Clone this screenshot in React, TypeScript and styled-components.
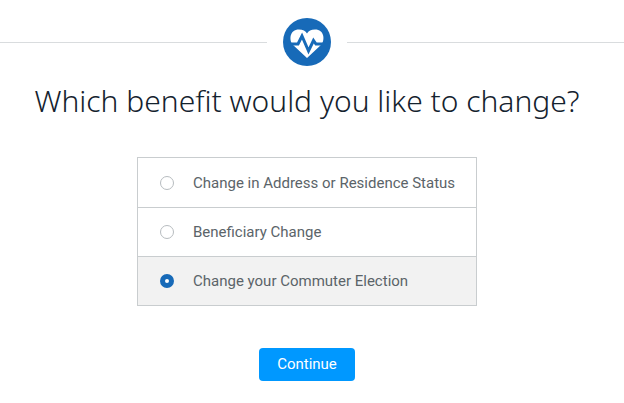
import React, { useState } from "react";
import styled, { createGlobalStyle } from "styled-components";

const GlobalStyle = createGlobalStyle`
  * { box-sizing: border-box; }
  body {
    margin: 0;
    background: #fff;
    font-family: Roboto, "Noto Sans", sans-serif;
    color: #14222e;
  }
`;

const Page = styled.main`
  display: flex;
  flex-direction: column;
  align-items: center;
  padding: 18px 10px 16px 0;
`;

const Divider = styled.header`
  align-self: stretch;
  display: flex;
  align-items: center;
  gap: 16px;
  margin-right: -10px;
`;

const Rule = styled.span<{ $trailing?: boolean }>`
  flex: 1 1 ${(p) => (p.$trailing ? "10px" : "0px")};
  height: 1px;
  background: #d9dcde;
`;

const Badge = styled.svg`
  flex: none;
  width: 48px;
  height: 48px;
`;

const Title = styled.h1`
  margin: 15px 0 0;
  font-family: "Noto Sans", "Open Sans", sans-serif;
  font-size: 30px;
  line-height: 40px;
  font-weight: 300;
  text-align: center;
`;

const Form = styled.form`
  display: flex;
  flex-direction: column;
  align-items: center;
  gap: 42px;
  margin-top: 36px;
  width: 100%;
`;

const Options = styled.fieldset`
  width: 100%;
  max-width: 340px;
  min-width: 0;
  margin: 0;
  padding: 0;
  border: 1px solid #c9cdcf;
`;

const Option = styled.label<{ $selected: boolean }>`
  display: flex;
  align-items: center;
  gap: 19px;
  min-height: 49px;
  padding: 0 12px 0 22px;
  font-size: 15px;
  line-height: 20px;
  color: #5b6469;
  background: ${(p) => (p.$selected ? "#f2f2f2" : "#fff")};
  cursor: pointer;

  & + & {
    border-top: 1px solid #c9cdcf;
  }
`;

const Radio = styled.input`
  appearance: none;
  flex: none;
  width: 14px;
  height: 14px;
  margin: 0;
  border: 1px solid #b7bcbf;
  border-radius: 50%;
  background: #fff;

  &:checked {
    border: 5px solid #176ab8;
  }
`;

const ContinueButton = styled.button`
  padding: 6px 18px;
  border: 0;
  border-radius: 4px;
  background: #0098ff;
  color: #fff;
  font: inherit;
  font-size: 15px;
  line-height: 21px;
  cursor: pointer;
`;

const choices = [
  "Change in Address or Residence Status",
  "Beneficiary Change",
  "Change your Commuter Election",
];

export default function App() {
  const [selected, setSelected] = useState(choices[2]);

  return (
    <>
      <GlobalStyle />
      <Page>
        <Divider>
          <Rule />
          <Badge viewBox="0 0 48 48" aria-hidden="true">
            <circle cx="24" cy="24" r="24" fill="#176ab8" />
            <path
              d="M24 40 L9.500 26.500 C6 22 6.500 11.500 16 11.500 C20 11.500 22.500 13 24 15.500 C25.500 13 28 11.500 32 11.500 C41.500 11.500 42 22 38.500 26.500 Z"
              fill="#fff"
            />
            <path
              d="M6 26 H15 L19 18 L25.500 33 L30.500 22.500 L33 26 H42"
              fill="none"
              stroke="#176ab8"
              strokeWidth="3"
              strokeLinejoin="miter"
            />
          </Badge>
          <Rule $trailing />
        </Divider>
        <Title id="question">Which benefit would you like to change?</Title>
        <Form onSubmit={(e) => e.preventDefault()}>
          <Options aria-labelledby="question">
            {choices.map((choice) => (
              <Option key={choice} $selected={choice === selected}>
                <Radio
                  type="radio"
                  name="benefit"
                  value={choice}
                  checked={choice === selected}
                  onChange={() => setSelected(choice)}
                />
                {choice}
              </Option>
            ))}
          </Options>
          <ContinueButton type="submit">Continue</ContinueButton>
        </Form>
      </Page>
    </>
  );
}
